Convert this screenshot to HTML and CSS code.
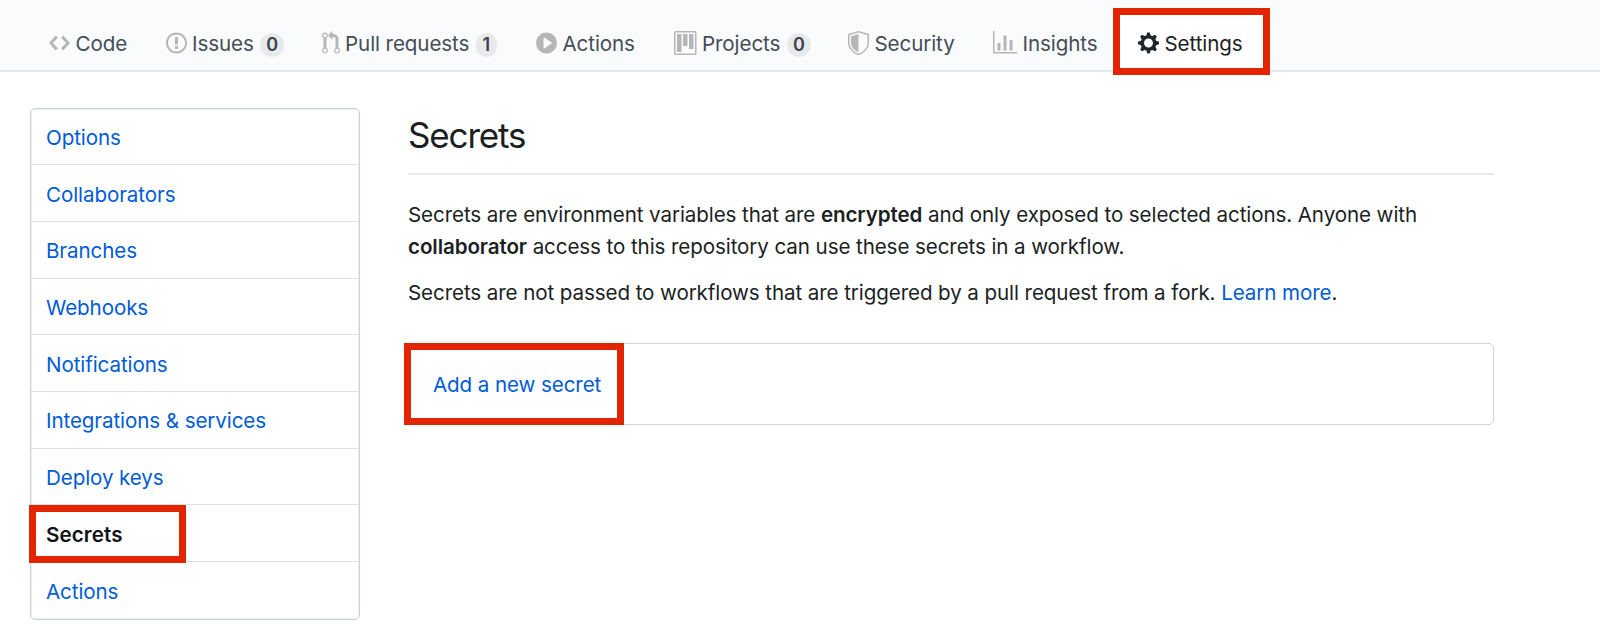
FILE: index.html
```html
<!DOCTYPE html>
<html lang="en">
<head>
<meta charset="utf-8">
<title>Secrets</title>
<link rel="stylesheet" href="styles.css">
</head>
<body>
<nav class="reponav">
  <a class="tab tab-code"><svg class="icon" width="21" height="24" viewBox="0 0 14 16"><path d="M9.5 3L8 4.5 11.5 8 8 11.5 9.5 13 14 8 9.5 3zm-5 0L0 8l4.5 5L6 11.5 2.5 8 6 4.5 4.5 3z"/></svg><span>Code</span></a>
  <a class="tab tab-issues"><svg class="icon" width="21" height="24" viewBox="0 0 14 16"><path d="M7 2.3c3.14 0 5.7 2.56 5.7 5.7s-2.56 5.7-5.7 5.7A5.71 5.71 0 0 1 1.3 8c0-3.14 2.56-5.7 5.7-5.7zM7 1C3.14 1 0 4.14 0 8s3.14 7 7 7 7-3.14 7-7-3.14-7-7-7zm1 3H6v5h2V4zm0 6H6v2h2v-2z"/></svg><span>Issues</span><b class="counter">0</b></a>
  <a class="tab tab-pulls"><svg class="icon" width="18" height="24" viewBox="0 0 12 16"><path d="M11 11.28V5c-.03-.78-.34-1.47-.94-2.06C9.46 2.35 8.78 2.03 8 2H7V0L4 3l3 3V4h1c.27.02.48.11.69.31.21.2.3.42.31.69v6.28A1.993 1.993 0 0 0 10 15a1.993 1.993 0 0 0 1-3.72zm-1 2.92c-.66 0-1.2-.55-1.2-1.2 0-.65.55-1.2 1.2-1.2.65 0 1.2.55 1.2 1.2 0 .65-.55 1.2-1.2 1.2zM4 3c0-1.11-.89-2-2-2a1.993 1.993 0 0 0-1 3.72v6.56A1.993 1.993 0 0 0 2 15a1.993 1.993 0 0 0 1-3.72V4.72c.59-.34 1-.98 1-1.72zm-.8 10c0 .66-.55 1.2-1.2 1.2-.65 0-1.2-.55-1.2-1.2 0-.65.55-1.2 1.2-1.2.65 0 1.2.55 1.2 1.2zM2 4.2C1.34 4.2.8 3.65.8 3c0-.65.55-1.2 1.2-1.2.65 0 1.2.55 1.2 1.2 0 .65-.55 1.2-1.2 1.2z"/></svg><span>Pull requests</span><b class="counter counter-one">1</b></a>
  <a class="tab tab-actions"><svg class="icon" width="21" height="24" viewBox="0 0 14 16"><path d="M14 8A7 7 0 1 1 0 8a7 7 0 0 1 14 0zm-8.223 3.482l4.599-3.066a.5.5 0 0 0 0-.832L5.777 4.518A.5.5 0 0 0 5 4.934v6.132a.5.5 0 0 0 .777.416z"/></svg><span>Actions</span></a>
  <a class="tab tab-projects"><svg class="icon" width="22.5" height="24" viewBox="0 0 15 16"><path fill-rule="evenodd" d="M10 12h3V2h-3v10zm-4-2h3V2H6v8zm-4 4h3V2H2v12zm-1 1h13V1H1v14zM14 0H1a1 1 0 0 0-1 1v14a1 1 0 0 0 1 1h13a1 1 0 0 0 1-1V1a1 1 0 0 0-1-1z"/></svg><span>Projects</span><b class="counter">0</b></a>
  <a class="tab tab-security"><svg class="icon" width="21" height="24" viewBox="0 0 14 16"><path fill-rule="evenodd" d="M0 2l7-2 7 2v6.02C14 12.69 8.69 16 7 16c-1.69 0-7-3.31-7-7.98V2zm1 .75L7 1l6 1.75v5.268C13 12.104 8.449 15 7 15c-1.449 0-6-2.896-6-6.982V2.75zm1 .75L7 2v12c-1.207 0-5-2.482-5-5.985V3.5z"/></svg><span>Security</span></a>
  <a class="tab tab-insights"><svg class="icon" width="24" height="24" viewBox="0 0 16 16"><path d="M16 14v1H0V0h1v14h15zM5 13H3V8h2v5zm4 0H7V3h2v10zm4 0h-2V6h2v7z"/></svg><span>Insights</span></a>
  <a class="tab tab-settings"><svg class="icon" width="21" height="24" viewBox="0 0 14 16"><path d="M14 8.77v-1.6l-1.94-.64-.45-1.09.88-1.84-1.13-1.13-1.81.91-1.09-.45-.69-1.92h-1.6l-.63 1.94-1.11.45-1.84-.88-1.13 1.13.91 1.81-.45 1.09L0 7.23v1.59l1.94.64.45 1.09-.88 1.84 1.13 1.13 1.81-.91 1.09.45.69 1.92h1.59l.63-1.94 1.11-.45 1.84.88 1.13-1.13-.92-1.81.47-1.09L14 8.75v.02zM7 11c-1.66 0-3-1.34-3-3s1.34-3 3-3 3 1.34 3 3-1.34 3-3 3z"/></svg><span>Settings</span></a>
</nav>
<div class="layout">
  <aside class="menu">
    <a class="menu-item">Options</a>
    <a class="menu-item">Collaborators</a>
    <a class="menu-item">Branches</a>
    <a class="menu-item">Webhooks</a>
    <a class="menu-item">Notifications</a>
    <a class="menu-item">Integrations &amp; services</a>
    <a class="menu-item">Deploy keys</a>
    <a class="menu-item selected">Secrets</a>
    <a class="menu-item">Actions</a>
  </aside>
  <main class="content">
    <h1 class="title">Secrets</h1>
    <p class="para">Secrets are environment variables that are <b>encrypted</b> and only exposed to selected actions. Anyone with<br><b>collaborator</b> access to this repository can use these secrets in a workflow.</p>
    <p class="para">Secrets are not passed to workflows that are triggered by a pull request from a fork. <a class="link">Learn more</a>.</p>
    <div class="box"><a class="link">Add a new secret</a></div>
  </main>
</div>
</body>
</html>
```
FILE: styles.css
```css
*, *::before, *::after { box-sizing: border-box; }
body {
  margin: 0;
  background: #fff;
  color: #1b1f24;
  font: 20.6px/31.5px Inter, "Liberation Sans", sans-serif;
  letter-spacing: -0.1px;
}
.reponav {
  display: flex;
  height: 72px;
  padding-left: 49px;
  background: #fafbfc;
  border-bottom: 1px solid #e8eaec;
  box-shadow: inset 0 -1px #e1e4e8;
  white-space: nowrap;
}
.tab {
  display: flex;
  flex: none;
  align-items: center;
  height: 86px;
  color: #444d56;
}
.tab span { padding-top: 1px; }
.icon { flex: none; fill: #b4b6b8; margin-right: 5.5px; }
.counter {
  width: 24px;
  height: 24px;
  margin: 3px 0 0 6.5px;
  border-radius: 12px;
  background: #e8e9eb;
  color: #3b444d;
  font-size: 18px;
  line-height: 24px;
  font-weight: 600;
  text-align: center;
}
.counter-one { width: 21px; }
.tab-code { width: 116.5px; }
.tab-issues { width: 156px; }
.tab-pulls { width: 214.5px; }
.tab-actions { width: 138px; }
.tab-projects { width: 174px; }
.tab-security { width: 145px; }
.tab-insights { width: 120px; }
.tab-settings {
  width: 157px;
  height: 66.5px;
  margin-top: 8px;
  padding: 3px 0 0 18px;
  border: 7px solid #e32400;
  background: #fff;
  color: #1b1f24;
}
.tab-settings .icon { fill: #1f252b; }
.layout { display: flex; gap: 48px; padding: 35.5px 0 0 30px; }
.menu {
  flex: none;
  width: 330px;
  height: 512px;
  border: 1px solid #cdd2d7;
  border-radius: 5px;
  box-shadow: inset 0 0 0 1px #edeff1;
}
.menu-item {
  position: relative;
  display: block;
  height: 56.7px;
  padding: 13.5px 0 0 15px;
  border-bottom: 1px solid #dcdfe4;
  color: #005cd6;
}
.menu-item:last-child { border-bottom: 0; }
.selected { color: #0f1318; font-weight: 600; letter-spacing: 0.1px; }
.selected::after {
  content: "";
  position: absolute;
  left: -2px;
  top: 0;
  width: 157px;
  height: 58px;
  border: 7px solid #e32400;
}
.content { width: 1086px; }
.title {
  height: 67.5px;
  margin: 0 0 24px;
  padding-top: 3px;
  border-bottom: 2px solid #e6e8ea;
  font-size: 35px;
  line-height: 48px;
  font-weight: 400;
  letter-spacing: -1.15px;
}
.para { margin: 0 0 15px; white-space: nowrap; }
.para b { font-weight: 600; }
.link { color: #005cd6; }
.box {
  position: relative;
  height: 82px;
  margin-top: 34.5px;
  padding: 25px 0 0 24px;
  border: 1px solid #d1d5da;
  border-radius: 5px;
}
.box::before {
  content: "";
  position: absolute;
  left: -5px;
  top: -1px;
  width: 220px;
  height: 82px;
  border: 7px solid #e32400;
}
```
